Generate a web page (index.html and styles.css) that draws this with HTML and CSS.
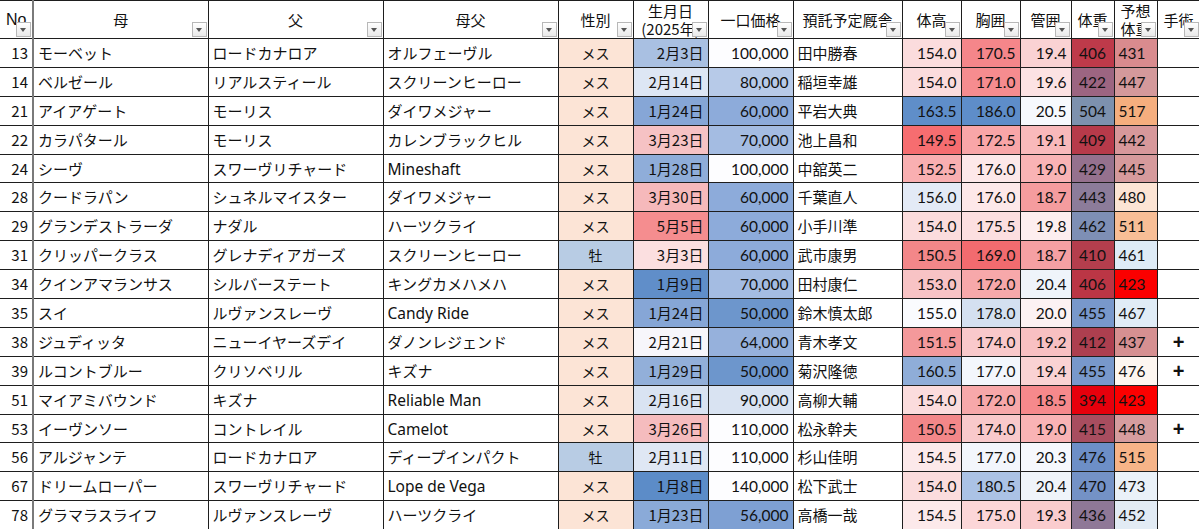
FILE: index.html
```html
<!DOCTYPE html>
<html lang="ja">
<head>
<meta charset="utf-8">
<title>募集馬一覧</title>
<link rel="stylesheet" href="styles.css">
</head>
<body>
<table class="sheet">
<colgroup>
<col class="w-no"><col class="w-name"><col class="w-name"><col class="w-name"><col class="w-sex"><col class="w-date"><col class="w-price"><col class="w-stable"><col class="w-m1"><col class="w-m1"><col class="w-m2"><col class="w-m3"><col class="w-m3"><col class="w-m3">
</colgroup>
<thead>
<tr class="head">
<th class="h-no">No<i class="flt"></i></th>
<th>母<i class="flt"></i></th>
<th>父<i class="flt"></i></th>
<th>母父<i class="flt"></i></th>
<th>性別<i class="flt"></i></th>
<th class="h-two">生月日<br>(2025年)<i class="flt"></i></th>
<th>一口価格<i class="flt"></i></th>
<th>預託予定厩舎<i class="flt"></i></th>
<th>体高<i class="flt"></i></th>
<th>胸囲<i class="flt"></i></th>
<th>管囲<i class="flt"></i></th>
<th>体重<i class="flt"></i></th>
<th class="h-two">予想<br>体重<i class="flt"></i></th>
<th>手術<i class="flt"></i></th>
</tr>
</thead>
<tbody>
<tr><td class="no">13</td><td>モーベット</td><td>ロードカナロア</td><td>オルフェーヴル</td><td class="sex f">メス</td><td class="date" style="background:#a9c0e2">2月3日</td><td class="num" style="background:#fdfdff">100,000</td><td>田中勝春</td><td class="num" style="background:#fbdcdd">154.0</td><td class="num" style="background:#f5868a">170.5</td><td class="num" style="background:#fad2d3">19.4</td><td class="wt" style="background:#be3a4a">406</td><td class="pw" style="background:#d98b8e">431</td><td class="op"></td></tr>
<tr><td class="no">14</td><td>ベルゼール</td><td>リアルスティール</td><td>スクリーンヒーロー</td><td class="sex f">メス</td><td class="date" style="background:#dde6f4">2月14日</td><td class="num" style="background:#b7cae8">80,000</td><td>稲垣幸雄</td><td class="num" style="background:#fbdcdd">154.0</td><td class="num" style="background:#f68c8f">171.0</td><td class="num" style="background:#fce2e3">19.6</td><td class="wt" style="background:#9c6581">422</td><td class="pw" style="background:#d4999b">447</td><td class="op"></td></tr>
<tr><td class="no">21</td><td>アイアゲート</td><td>モーリス</td><td>ダイワメジャー</td><td class="sex f">メス</td><td class="date" style="background:#86a6d6">1月24日</td><td class="num" style="background:#8dabda">60,000</td><td>平岩大典</td><td class="num" style="background:#5f8ec9">163.5</td><td class="num" style="background:#5e8dc9">186.0</td><td class="num" style="background:#f7f9fd">20.5</td><td class="wt" style="background:#7d91ae">504</td><td class="pw" style="background:#f5ae7e">517</td><td class="op"></td></tr>
<tr><td class="no">22</td><td>カラパタール</td><td>モーリス</td><td>カレンブラックヒル</td><td class="sex f">メス</td><td class="date" style="background:#f6c2c4">3月23日</td><td class="num" style="background:#a4bce2">70,000</td><td>池上昌和</td><td class="num" style="background:#f66d70">149.5</td><td class="num" style="background:#f9a6a8">172.5</td><td class="num" style="background:#f9b9bb">19.1</td><td class="wt" style="background:#b73a4a">409</td><td class="pw" style="background:#d7989b">442</td><td class="op"></td></tr>
<tr><td class="no">24</td><td>シーヴ</td><td>スワーヴリチャード</td><td><span class="lat">Mineshaft</span></td><td class="sex f">メス</td><td class="date" style="background:#8fadd9">1月28日</td><td class="num" style="background:#fdfdff">100,000</td><td>中舘英二</td><td class="num" style="background:#f9afb1">152.5</td><td class="num" style="background:#fde8e9">176.0</td><td class="num" style="background:#f9b3b5">19.0</td><td class="wt" style="background:#95718e">429</td><td class="pw" style="background:#d69a9c">445</td><td class="op"></td></tr>
<tr><td class="no">28</td><td>クードラパン</td><td>シュネルマイスター</td><td>ダイワメジャー</td><td class="sex f">メス</td><td class="date" style="background:#f6b9bb">3月30日</td><td class="num" style="background:#8dabda">60,000</td><td>千葉直人</td><td class="num" style="background:#e3eaf6">156.0</td><td class="num" style="background:#fde8e9">176.0</td><td class="num" style="background:#f59c9e">18.7</td><td class="wt" style="background:#8c7c9a">443</td><td class="pw" style="background:#fce4d4">480</td><td class="op"></td></tr>
<tr><td class="no">29</td><td>グランデストラーダ</td><td>ナダル</td><td>ハーツクライ</td><td class="sex f">メス</td><td class="date" style="background:#f58d8f">5月5日</td><td class="num" style="background:#8dabda">60,000</td><td>小手川準</td><td class="num" style="background:#fbdcdd">154.0</td><td class="num" style="background:#fcdfe0">175.5</td><td class="num" style="background:#fdeeef">19.8</td><td class="wt" style="background:#7e8fb5">462</td><td class="pw" style="background:#f8be96">511</td><td class="op"></td></tr>
<tr><td class="no">31</td><td>クリッパークラス</td><td>グレナディアガーズ</td><td>スクリーンヒーロー</td><td class="sex m">牡</td><td class="date" style="background:#fbdfe0">3月3日</td><td class="num" style="background:#8dabda">60,000</td><td>武市康男</td><td class="num" style="background:#f38789">150.5</td><td class="num" style="background:#f26b6f">169.0</td><td class="num" style="background:#f5a0a3">18.7</td><td class="wt" style="background:#b43e4d">410</td><td class="pw" style="background:#deebf6">461</td><td class="op"></td></tr>
<tr><td class="no">34</td><td>クインアマランサス</td><td>シルバーステート</td><td>キングカメハメハ</td><td class="sex f">メス</td><td class="date" style="background:#608ec9">1月9日</td><td class="num" style="background:#a4bce2">70,000</td><td>田村康仁</td><td class="num" style="background:#f8c3c5">153.0</td><td class="num" style="background:#f7a8aa">172.0</td><td class="num" style="background:#eff4fa">20.4</td><td class="wt" style="background:#bb3645">406</td><td class="pw" style="background:#fb0000">423</td><td class="op"></td></tr>
<tr><td class="no">35</td><td>スイ</td><td>ルヴァンスレーヴ</td><td><span class="lat">Candy Ride</span></td><td class="sex f">メス</td><td class="date" style="background:#86a6d6">1月24日</td><td class="num" style="background:#6d96cc">50,000</td><td>鈴木慎太郎</td><td class="num" style="background:#fafbfe">155.0</td><td class="num" style="background:#d4e0f0">178.0</td><td class="num" style="background:#fcf2f3">20.0</td><td class="wt" style="background:#7898cb">455</td><td class="pw" style="background:#e0ecf6">467</td><td class="op"></td></tr>
<tr><td class="no">38</td><td>ジュディッタ</td><td>ニューイヤーズデイ</td><td>ダノンレジェンド</td><td class="sex f">メス</td><td class="date" style="background:#f7f6fb">2月21日</td><td class="num" style="background:#96b1dc">64,000</td><td>青木孝文</td><td class="num" style="background:#f4999b">151.5</td><td class="num" style="background:#f9c9cb">174.0</td><td class="num" style="background:#f8c0c2">19.2</td><td class="wt" style="background:#ad3f4f">412</td><td class="pw" style="background:#d69091">437</td><td class="op">+</td></tr>
<tr><td class="no">39</td><td>ルコントブルー</td><td>クリソベリル</td><td>キズナ</td><td class="sex f">メス</td><td class="date" style="background:#92afd9">1月29日</td><td class="num" style="background:#6d96cc">50,000</td><td>菊沢隆徳</td><td class="num" style="background:#8fadd8">160.5</td><td class="num" style="background:#f3f6fc">177.0</td><td class="num" style="background:#fad2d3">19.4</td><td class="wt" style="background:#7898cb">455</td><td class="pw" style="background:#fdf6f0">476</td><td class="op">+</td></tr>
<tr><td class="no">51</td><td>マイアミバウンド</td><td>キズナ</td><td><span class="lat">Reliable Man</span></td><td class="sex f">メス</td><td class="date" style="background:#d9e3f2">2月16日</td><td class="num" style="background:#d9e3f2">90,000</td><td>高柳大輔</td><td class="num" style="background:#fbdcdd">154.0</td><td class="num" style="background:#f7a8aa">172.0</td><td class="num" style="background:#f6898c">18.5</td><td class="wt" style="background:#e6000c">394</td><td class="pw" style="background:#fb0000">423</td><td class="op"></td></tr>
<tr><td class="no">53</td><td>イーヴンソー</td><td>コントレイル</td><td><span class="lat">Camelot</span></td><td class="sex f">メス</td><td class="date" style="background:#f5bcbe">3月26日</td><td class="num" style="background:#fdfdff">110,000</td><td>松永幹夫</td><td class="num" style="background:#f38789">150.5</td><td class="num" style="background:#f9c9cb">174.0</td><td class="num" style="background:#f9b3b5">19.0</td><td class="wt" style="background:#a84d5f">415</td><td class="pw" style="background:#d69d9f">448</td><td class="op">+</td></tr>
<tr><td class="no">56</td><td>アルジャンテ</td><td>ロードカナロア</td><td>ディープインパクト</td><td class="sex m">牡</td><td class="date" style="background:#dfe7f4">2月11日</td><td class="num" style="background:#fdfdff">110,000</td><td>杉山佳明</td><td class="num" style="background:#fce9ea">154.5</td><td class="num" style="background:#f3f6fc">177.0</td><td class="num" style="background:#f6f8fd">20.3</td><td class="wt" style="background:#6d8fc7">476</td><td class="pw" style="background:#f7b488">515</td><td class="op"></td></tr>
<tr><td class="no">67</td><td>ドリームローパー</td><td>スワーヴリチャード</td><td><span class="lat">Lope de Vega</span></td><td class="sex f">メス</td><td class="date" style="background:#5c8cc8">1月8日</td><td class="num" style="background:#fdfdff">140,000</td><td>松下武士</td><td class="num" style="background:#fbdcdd">154.0</td><td class="num" style="background:#abc2e5">180.5</td><td class="num" style="background:#eff4fa">20.4</td><td class="wt" style="background:#7492c6">470</td><td class="pw" style="background:#eaf1f8">473</td><td class="op"></td></tr>
<tr><td class="no">78</td><td>グラマラスライフ</td><td>ルヴァンスレーヴ</td><td>ハーツクライ</td><td class="sex f">メス</td><td class="date" style="background:#8aaad8">1月23日</td><td class="num" style="background:#7ea0d3">56,000</td><td>高橋一哉</td><td class="num" style="background:#fce9ea">154.5</td><td class="num" style="background:#fcd6d8">175.0</td><td class="num" style="background:#faccce">19.3</td><td class="wt" style="background:#8f7897">436</td><td class="pw" style="background:#e2ebf4">452</td><td class="op"></td></tr>
</tbody>
</table>
</body>
</html>
```

FILE: styles.css
```css
html, body {
  margin: 0;
  padding: 0;
  background: #ffffff;
}

body {
  font-family: "Noto Sans CJK JP", "Noto Sans", sans-serif;
  font-size: 15px;
  color: #111111;
}

.sheet {
  border-collapse: collapse;
  table-layout: fixed;
  width: 1199px;
}

.w-no { width: 33px; }
.w-name { width: 175px; }
.w-sex { width: 75px; }
.w-date { width: 75px; }
.w-price { width: 85px; }
.w-stable { width: 109px; }
.w-m1 { width: 59px; }
.w-m2 { width: 51px; }
.w-m3 { width: 43px; }

.sheet th,
.sheet td {
  border: 1px solid #1e1e1e;
  padding: 0 4px;
  white-space: nowrap;
  overflow: hidden;
  line-height: 18px;
}

.sheet th:first-child,
.sheet td:first-child {
  border-left: none;
  border-right: 2px solid #7a7a7a;
}

.head {
  height: 38px;
}

.head th {
  position: relative;
  font-weight: normal;
  text-align: center;
  vertical-align: middle;
  font-size: 15px;
  padding: 0 2px;
}

.head th.h-no {
  text-align: left;
  padding-left: 6px;
  font-family: "Liberation Sans", "Noto Sans", sans-serif;
  font-size: 16px;
}

.head th.h-two {
  line-height: 18px;
  padding-top: 1px;
}

.flt {
  position: absolute;
  right: 1px;
  bottom: 1px;
  width: 15px;
  height: 15px;
  box-sizing: border-box;
  border: 1px solid #b8b8b8;
  background: linear-gradient(#ffffff, #e9e9e9);
}

.flt::after {
  content: "";
  position: absolute;
  left: 3px;
  top: 5px;
  border-left: 3.5px solid transparent;
  border-right: 3.5px solid transparent;
  border-top: 4px solid #555555;
}

tbody tr {
  height: 28.9px;
}

.no {
  text-align: right;
  padding: 0 2px 0 0;
}

.sex {
  text-align: center;
  font-size: 14px;
}

.sex.f { background: #fce4d6; }
.sex.m { background: #b8cce4; }

.date {
  text-align: right;
  padding-right: 4px;
}

.num {
  text-align: right;
  padding-right: 3px;
  font-family: "Lato", "Noto Sans", sans-serif;
  font-size: 15.5px;
}

.wt {
  text-align: center;
  padding: 0;
  font-family: "Lato", "Noto Sans", sans-serif;
  font-size: 15.5px;
}

.pw {
  text-align: left;
  padding: 0 0 0 3px;
  font-family: "Lato", "Noto Sans", sans-serif;
  font-size: 15.5px;
}

.op {
  text-align: center;
  font-family: "Liberation Sans", sans-serif;
  font-size: 20px;
  font-weight: bold;
}

.lat {
  font-family: "Noto Sans", sans-serif;
  font-size: 15.5px;
}
```
